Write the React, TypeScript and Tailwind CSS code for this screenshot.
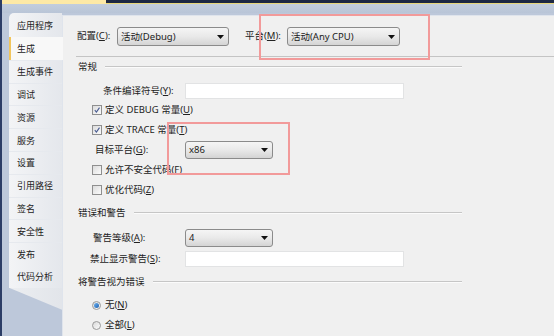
import React from "react";

const FONT = '"Noto Sans", "Noto Sans CJK SC", sans-serif';

function U({ c }: { c: string }) {
  return <span className="underline underline-offset-[1px] decoration-[0.5px]">{c}</span>;
}

function Arrow() {
  return (
    <svg className="absolute right-[4px] top-1/2 -translate-y-1/2" width="7" height="4" viewBox="0 0 7 4">
      <path d="M0 0H7L3.5 4Z" fill="#111" />
    </svg>
  );
}

function Select({ cls, children }: { cls: string; children: React.ReactNode }) {
  return (
    <div
      className={
        "relative flex items-center rounded-[3px] border border-[#8b8b8b] bg-gradient-to-b from-[#f5f5f5] via-[#e9e9e9] to-[#d4d4d4] pl-[3px] " +
        cls
      }
    >
      <span className="leading-none">{children}</span>
      <Arrow />
    </div>
  );
}

function Input() {
  return <div className="h-[16px] w-[219px] border border-[#e2e3e4] bg-white" />;
}

function Checkbox({ checked }: { checked?: boolean }) {
  return (
    <div className="relative h-[10px] w-[10px] shrink-0 border border-[#8f8f8f] bg-gradient-to-br from-[#dcdcdc] to-[#fbfbfb]">
      {checked && (
        <svg className="absolute left-[0px] top-[0px]" width="8" height="8" viewBox="0 0 8 8">
          <path d="M1.8 4.2 L3.4 6 L6.5 1.6" stroke="#4a5d92" strokeWidth="1.1" fill="none" />
        </svg>
      )}
    </div>
  );
}

function Radio({ checked }: { checked?: boolean }) {
  return (
    <div className="flex h-[9px] w-[9px] shrink-0 items-center justify-center rounded-full border border-[#9a9a9a] bg-gradient-to-br from-[#dadada] to-[#fbfbfb]">
      {checked && <div className="h-[5px] w-[5px] rounded-full bg-gradient-to-br from-[#6fb4f0] to-[#1c5fb0]" />}
    </div>
  );
}

function Heading({ children }: { children: React.ReactNode }) {
  return (
    <div className="ml-[15px] flex h-[14px] w-[384px] items-center gap-[8px]">
      <span className="leading-none">{children}</span>
      <div className="flex flex-1 flex-col">
        <div className="h-px bg-[#c6c6c6]" />
        <div className="h-px bg-[#fbfbfb]" />
      </div>
    </div>
  );
}

const TABS = ["应用程序", "生成", "生成事件", "调试", "资源", "服务", "设置", "引用路径", "签名", "安全性", "发布", "代码分析"];

export default function App() {
  return (
    <div
      className="relative flex h-[336px] w-[554px] overflow-hidden bg-[#bdc8da] text-[9.5px] text-[#222]"
      style={{ fontFamily: FONT }}
    >
      <div className="w-[2px] shrink-0 bg-[#2c3d66]" />
      <div className="flex flex-1 flex-col">
        {/* top bars */}
        <div className="flex h-[4px] shrink-0">
          <div className="w-[104px] bg-[#fde9a6]" />
          <div className="flex-1 border-b border-[#e8d77a] bg-[#1d2843]" />
        </div>
        <div className="h-[9px] shrink-0 bg-gradient-to-b from-[#c2cddd] to-[#b9c5d7]" />
        {/* main */}
        <div className="flex flex-1">
          <div className="w-[7px] shrink-0" />
          {/* tab column */}
          <div className="flex w-[53px] shrink-0 flex-col">
            <div className="rounded-tl-[5px] bg-gradient-to-r from-[#f3f4f6] to-[#e4e7ec] pt-[0.5px]">
              {TABS.map((t, i) => {
                const sel = i === 1;
                const first = i === 0;
                return (
                  <div
                    key={t}
                    className={
                      (first ? "h-[23.5px] " : "h-[22.8px] ") +
                      (sel
                        ? "relative z-10 -mr-[1px] flex items-center border-l-2 border-[#f2c55c] bg-[#f8f8f8] pl-[6px] text-[9px]"
                        : "flex items-center pl-[8px] text-[9px]") +
                      (i < TABS.length - 1 && !sel && i !== 0 ? " border-t border-[#e6e9ee]" : "")
                    }
                  >
                    <span className="leading-none">{t}</span>
                  </div>
                );
              })}
            </div>
            <div className="h-[22px] bg-gradient-to-r from-[#eceef1] to-[#e2e5ea] [clip-path:polygon(0_0,100%_0,100%_100%)]" />
          </div>
          {/* content */}
          <div className="mt-[2px] flex flex-1 flex-col border-l border-t border-[#dfe4ec] bg-[#f0f0f0]">
            {/* config row */}
            <div className="ml-[14px] mt-[11px] flex h-[19px] items-center">
              <div className="w-[40px]">
                配置(<U c="C" />):
              </div>
              <Select cls="h-[19px] w-[112px]">活动(Debug)</Select>
              <div className="ml-[16px] w-[42px]">
                平台(<U c="M" />):
              </div>
              <Select cls="h-[19px] w-[113px]">活动(Any CPU)</Select>
            </div>
            <div className="ml-[13px] mt-[10px] h-px bg-[#c4c4c4]" />
            <div className="mt-[3px]">
              <Heading>常规</Heading>
            </div>
            {/* conditional symbols */}
            <div className="mt-[9px] flex h-[16px] items-center">
              <div className="w-[122px] pl-[40px]">
                条件编译符号(<U c="Y" />):
              </div>
              <Input />
            </div>
            <div className="mt-[1px] flex h-[20px] items-center gap-[3px] pl-[29px]">
              <Checkbox checked />
              <span>
                定义 DEBUG 常量(<U c="U" />)
              </span>
            </div>
            <div className="flex h-[20px] items-center gap-[3px] pl-[29px]">
              <Checkbox checked />
              <span>
                定义 TRACE 常量(<U c="T" />)
              </span>
            </div>
            <div className="flex h-[20px] items-center">
              <div className="w-[122px] pl-[32px]">
                目标平台(<U c="G" />):
              </div>
              <Select cls="h-[18px] w-[88px]">x86</Select>
            </div>
            <div className="flex h-[20px] items-center gap-[3px] pl-[29px]">
              <Checkbox />
              <span>
                允许不安全代码(<U c="F" />)
              </span>
            </div>
            <div className="flex h-[20px] items-center gap-[3px] pl-[29px]">
              <Checkbox />
              <span>
                优化代码(<U c="Z" />)
              </span>
            </div>
            <div className="mt-[6px]">
              <Heading>错误和警告</Heading>
            </div>
            <div className="mt-[8px] flex h-[20px] items-center">
              <div className="w-[122px] pl-[30px]">
                警告等级(<U c="A" />):
              </div>
              <Select cls="h-[18px] w-[88px]">4</Select>
            </div>
            <div className="mt-[2px] flex h-[18px] items-center">
              <div className="w-[122px] pl-[27px]">
                禁止显示警告(<U c="S" />):
              </div>
              <Input />
            </div>
            <div className="mt-[7px]">
              <Heading>将警告视为错误</Heading>
            </div>
            <div className="mt-[6px] flex h-[20px] items-center gap-[4px] pl-[29px]">
              <Radio checked />
              <span>
                无(<U c="N" />)
              </span>
            </div>
            <div className="flex h-[20px] items-center gap-[4px] pl-[29px]">
              <Radio />
              <span>
                全部(<U c="L" />)
              </span>
            </div>
          </div>
        </div>
      </div>
      {/* annotation boxes */}
      <div className="absolute left-[259px] top-[14px] h-[46px] w-[171px] border-2 border-solid border-[#f29a9a]" />
      <div className="absolute left-[167px] top-[122px] h-[53px] w-[123px] border-2 border-solid border-[#f29a9a]" />
    </div>
  );
}
